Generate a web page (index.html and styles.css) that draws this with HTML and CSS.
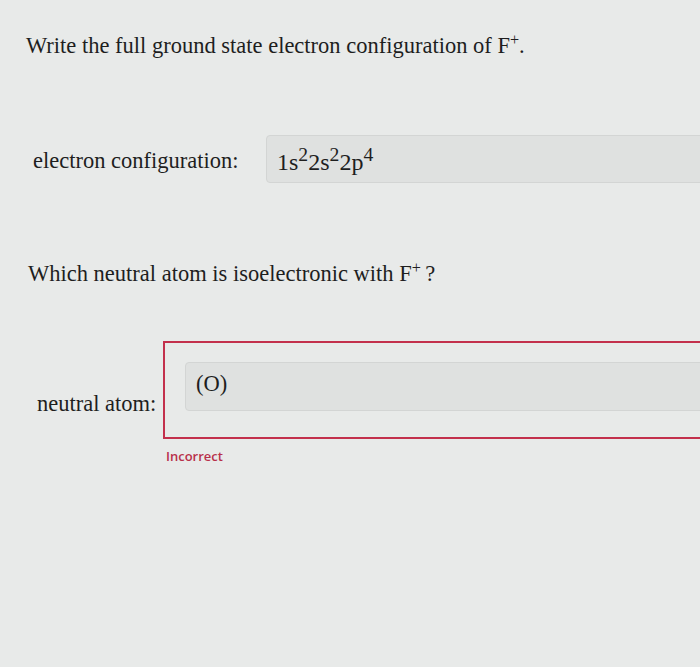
FILE: index.html
```html
<!DOCTYPE html>
<html>
<head>
<meta charset="utf-8">
<link rel="stylesheet" href="styles.css">
</head>
<body>
<div class="page">
  <p class="q q1">Write the full ground state electron configuration of F<sup class="chg">+</sup>.</p>
  <div class="row row1">
    <span class="label label1">electron configuration:</span>
    <div class="field field1"><span class="val">1s<sup>2</sup>2s<sup>2</sup>2p<sup>4</sup></span></div>
  </div>
  <p class="q q2">Which neutral atom is isoelectronic with F<sup class="chg">+</sup>&#8201;?</p>
  <div class="row row2">
    <span class="label label2">neutral atom:</span>
    <div class="answer">
      <div class="wrong">
        <div class="field field2"><span class="val">(O)</span></div>
      </div>
      <div class="status">Incorrect</div>
    </div>
  </div>
</div>
</body>
</html>
```

FILE: styles.css
```css
html, body {
  margin: 0;
  padding: 0;
  background: #e8eae9;
  overflow: hidden;
}
.page {
  width: 700px;
  height: 667px;
  overflow: hidden;
  font-family: "Liberation Serif", "Times New Roman", serif;
  color: #1e1e1e;
  padding-top: 1px;
  box-sizing: border-box;
}
.q {
  margin: 0;
  font-size: 22.5px;
  line-height: 26px;
  white-space: nowrap;
}
.q1 {
  margin-top: 32px;
  margin-left: 26px;
}
.q2 {
  margin-top: 78px;
  margin-left: 28px;
}
sup {
  font-size: 0.82em;
  line-height: 0;
  vertical-align: 0.44em;
}
.chg {
  font-size: 0.72em;
  vertical-align: 0.5em;
}
.row {
  display: flex;
  white-space: nowrap;
}
.label {
  font-size: 22.5px;
  line-height: 26px;
}
.row1 {
  margin-top: 76px;
  align-items: center;
}
.label1 {
  margin-left: 33px;
  width: 233px;
  flex: none;
  padding-top: 4px;
}
.field {
  flex: none;
  box-sizing: border-box;
  background: #dfe1e0;
  border: 1px solid #d3d5d4;
  border-radius: 4px;
  font-size: 22.5px;
  line-height: 26px;
  display: flex;
  align-items: center;
}
.field1 {
  width: 460px;
  height: 48px;
  padding-left: 10px;
  padding-top: 5px;
  font-size: 24px;
}
.row2 {
  margin-top: 54px;
}
.label2 {
  margin-left: 37px;
  width: 126px;
  flex: none;
  margin-top: 50px;
}
.answer {
  flex: none;
  width: 560px;
}
.wrong {
  box-sizing: border-box;
  height: 98px;
  border: 2px solid #c3304c;
  border-right: none;
  padding: 19px 0 0 20px;
}
.field2 {
  height: 49px;
  padding-left: 10px;
  padding-bottom: 6px;
  width: 560px;
}
.status {
  margin-top: 9px;
  margin-left: 3px;
  font-family: "Open Sans", "Noto Sans", sans-serif;
  font-size: 13px;
  line-height: 16px;
  font-weight: 600;
  color: #b8304a;
}
```
